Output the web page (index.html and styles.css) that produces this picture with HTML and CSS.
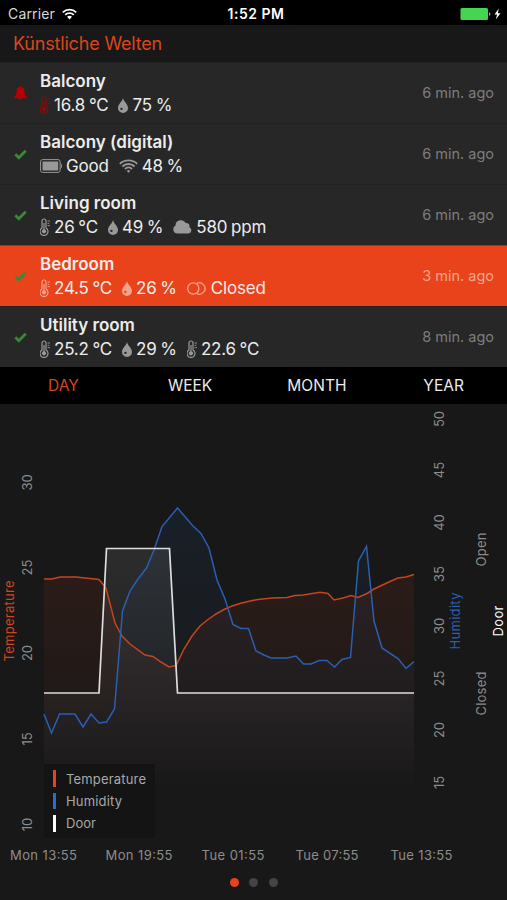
FILE: index.html
```html
<!DOCTYPE html>
<html lang="en">
<head>
    <meta charset="UTF-8">
    <meta name="viewport" content="width=device-width, initial-scale=1.0">
    <title>Künstliche Welten</title>
    <link rel="stylesheet" href="styles.css">
</head>
<body>
    <!-- Shared icons -->
    <svg class="sprite">
        <symbol id="thermometer" viewBox="0 0 10 18">
            <path d="M2 10V3a2 2 0 0 1 4 0v7a4 4 0 1 1-4 0z" fill="none" stroke="currentColor" stroke-width="1.2"/>
            <circle cx="4" cy="13.3" r="2.1" fill="currentColor"/>
            <path d="M4 5v7" stroke="currentColor" stroke-width="1.2"/>
            <path d="M7.5 3H10M7.5 5.3H9.3M7.5 7.6H10" stroke="currentColor" stroke-width=".9"/>
        </symbol>
        <symbol id="drop" viewBox="0 0 10 15">
            <path fill="currentColor" fill-rule="evenodd" d="M5 0C5.6 3.4 10 6.2 10 10a5 5 0 0 1-10 0C0 6.2 4.4 3.4 5 0zM3.4 9.7a1.2 1.2 0 1 0 .1 2.4 1.2 1.2 0 0 0-.1-2.4z"/>
        </symbol>
        <symbol id="check" viewBox="0 0 13 11">
            <path d="M1.3 5.3l3.5 3.5L11.7 1.8" fill="none" stroke="currentColor" stroke-width="2.7"/>
        </symbol>
    </svg>

    <div class="status-bar">
        <div class="carrier">
            <span>Carrier</span>
            <svg class="wifi" width="15" height="12" viewBox="0 0 15 12">
                <path d="M.8 4.3a9.7 9.7 0 0 1 13.4 0M3.2 6.9a6.2 6.2 0 0 1 8.6 0" fill="none" stroke="#fff" stroke-width="1.7"/>
                <path d="M5 8.8a3.7 3.7 0 0 1 5 0L7.5 11.5z" fill="#fff"/>
            </svg>
        </div>
        <span class="clock">1:52 PM</span>
        <svg class="power" width="42" height="14" viewBox="0 0 42 14">
            <rect x=".5" y="1" width="27.5" height="12" rx="1.5" fill="#46d552"/>
            <path d="M29 5a2.1 2.1 0 0 1 0 4z" fill="#46d552"/>
            <path d="M38.8 1.5L34.5 7.5h2.6l-1.3 5 4.7-6.2h-2.7z" fill="#fff"/>
        </svg>
    </div>

    <h1 class="title">Künstliche Welten</h1>

    <div class="sensors">
        <div class="sensor alarm">
            <svg class="state" width="13" height="14" viewBox="0 0 13 14">
                <path d="M6.5 0c.7 0 1 .4 1 1 2 .5 3 2 3 4.2 0 3 .8 4.3 2.5 5.8v1.3H0V11c1.7-1.5 2.5-2.8 2.5-5.8C2.5 3 3.5 1.5 5.5 1c0-.6.3-1 1-1zM5 12.3h3a1.5 1.5 0 0 1-3 0z" fill="#b40202"/>
            </svg>
            <div class="info">
                <div class="name">Balcony</div>
                <div class="values">
                    <span class="value"><svg class="thermometer"><use href="#thermometer"/></svg>16.8 °C</span>
                    <span class="value"><svg class="drop"><use href="#drop"/></svg>75 %</span>
                </div>
            </div>
            <span class="age">6 min. ago</span>
        </div>
        <div class="sensor">
            <svg class="state" width="13" height="11"><use href="#check"/></svg>
            <div class="info">
                <div class="name">Balcony (digital)</div>
                <div class="values">
                    <span class="value">
                        <svg width="22" height="14" viewBox="0 0 22 14">
                            <rect x=".6" y=".6" width="19.5" height="12.8" rx="2" fill="none" stroke="currentColor" stroke-width="1"/>
                            <rect x="2.5" y="2.5" width="15.7" height="9" fill="currentColor"/>
                            <path d="M20.3 4.3c1.6.6 1.6 4.8 0 5.4" fill="none" stroke="currentColor" stroke-width="1"/>
                        </svg>Good</span>
                    <span class="value">
                        <svg width="19" height="14" viewBox="0 0 19 14">
                            <path d="M.8 4.9a12.6 12.6 0 0 1 17.4 0M3.4 7.5a8.8 8.8 0 0 1 12.2 0M6 10a5 5 0 0 1 7 0" fill="none" stroke="currentColor" stroke-width="1.9"/>
                            <path d="M7.8 11.9a2.5 2.5 0 0 1 3.4 0L9.5 13.8z" fill="currentColor"/>
                        </svg>48 %</span>
                </div>
            </div>
            <span class="age">6 min. ago</span>
        </div>
        <div class="sensor">
            <svg class="state" width="13" height="11"><use href="#check"/></svg>
            <div class="info">
                <div class="name">Living room</div>
                <div class="values">
                    <span class="value"><svg class="thermometer"><use href="#thermometer"/></svg>26 °C</span>
                    <span class="value"><svg class="drop"><use href="#drop"/></svg>49 %</span>
                    <span class="value">
                        <svg width="19" height="14" viewBox="0 0 19 14">
                            <path d="M4.5 13.5a4.2 4.2 0 0 1-2-7.9A5.5 5.5 0 0 1 12.8 3a3.3 3.3 0 0 1 3.6 4.2 3.3 3.3 0 0 1-1 6.3z" fill="currentColor"/>
                        </svg>580 ppm</span>
                </div>
            </div>
            <span class="age">6 min. ago</span>
        </div>
        <div class="sensor selected">
            <svg class="state" width="13" height="11"><use href="#check"/></svg>
            <div class="info">
                <div class="name">Bedroom</div>
                <div class="values">
                    <span class="value"><svg class="thermometer"><use href="#thermometer"/></svg>24.5 °C</span>
                    <span class="value"><svg class="drop"><use href="#drop"/></svg>26 %</span>
                    <span class="value">
                        <svg width="20" height="13" viewBox="0 0 20 13">
                            <circle cx="6.3" cy="6.5" r="5.6" fill="none" stroke="currentColor" stroke-width="1.3"/>
                            <path d="M9.3 1.8a5.6 5.6 0 1 1 0 9.4" fill="none" stroke="currentColor" stroke-width="1.3"/>
                        </svg>Closed</span>
                </div>
            </div>
            <span class="age">3 min. ago</span>
        </div>
        <div class="sensor">
            <svg class="state" width="13" height="11"><use href="#check"/></svg>
            <div class="info">
                <div class="name">Utility room</div>
                <div class="values">
                    <span class="value"><svg class="thermometer"><use href="#thermometer"/></svg>25.2 °C</span>
                    <span class="value"><svg class="drop"><use href="#drop"/></svg>29 %</span>
                    <span class="value"><svg class="thermometer"><use href="#thermometer"/></svg>22.6 °C</span>
                </div>
            </div>
            <span class="age">8 min. ago</span>
        </div>
    </div>

    <div class="tabs">
        <span class="tab active">DAY</span>
        <span class="tab">WEEK</span>
        <span class="tab">MONTH</span>
        <span class="tab">YEAR</span>
    </div>

    <svg class="chart" width="507" height="466" viewBox="0 404 507 466">
        <defs>
            <linearGradient id="tempFill" gradientUnits="userSpaceOnUse" x1="0" y1="574" x2="0" y2="790">
                <stop offset="0" stop-color="#e8431b" stop-opacity=".09"/>
                <stop offset="1" stop-color="#e8431b" stop-opacity="0"/>
            </linearGradient>
            <linearGradient id="humFill" gradientUnits="userSpaceOnUse" x1="0" y1="508" x2="0" y2="790">
                <stop offset="0" stop-color="#2c6cc8" stop-opacity=".09"/>
                <stop offset="1" stop-color="#2c6cc8" stop-opacity="0"/>
            </linearGradient>
            <linearGradient id="doorFill" gradientUnits="userSpaceOnUse" x1="0" y1="548" x2="0" y2="790">
                <stop offset="0" stop-color="#fff" stop-opacity=".09"/>
                <stop offset="1" stop-color="#fff" stop-opacity="0"/>
            </linearGradient>
        </defs>

        <!-- Temperature -->
        <path fill="url(#tempFill)" d="M44 579L52 579 60 577 76 577 99 579.5 106 588 115 623 122 636 130 644 145 655 153 656.5 161 662 169 667 176 665.5 184 649 192 636 200 626 208 619.5 216 614 224 609.5 232 606 240 603.5 250 601 258 599.5 272 598 287 597.5 295 595.5 303 595 320 592.3 328 593.5 334 600 343 598 351 595.5 358 597.5 367 593.5 374 589 390 581.5 398 578 406 577 414 574.5V790H44z"/>
        <!-- Humidity -->
        <path fill="url(#humFill)" d="M44 714L51.5 733 59.5 714 75 714 83 727 91 714 99 723 106.5 722 114.5 709 122.5 611 130 591 138 579 146.5 568 154 550 162 526.5 177.5 508 193 526 201 533.5 209 548 217 580 225 599 233 624.5 241 628.5 248.5 628.5 256 651 264 655 271 658 287 658 296 656 303.5 664 311 664 319 660.5 327 660.5 334.5 667 342 659.5 350.5 657.5 358.5 561 366.5 546.5 374 621 382 648 398 658.5 406 668.5 414 661.5V790H44z"/>
        <!-- Door -->
        <path fill="url(#doorFill)" d="M44 693H99L106.5 548.5H169.5L177.5 693H414V790H44z"/>

        <polyline class="line temperature" points="44,579 52,579 60,577 76,577 99,579.5 106,588 115,623 122,636 130,644 145,655 153,656.5 161,662 169,667 176,665.5 184,649 192,636 200,626 208,619.5 216,614 224,609.5 232,606 240,603.5 250,601 258,599.5 272,598 287,597.5 295,595.5 303,595 320,592.3 328,593.5 334,600 343,598 351,595.5 358,597.5 367,593.5 374,589 390,581.5 398,578 406,577 414,574.5"/>
        <polyline class="line humidity" points="44,714 51.5,733 59.5,714 75,714 83,727 91,714 99,723 106.5,722 114.5,709 122.5,611 130,591 138,579 146.5,568 154,550 162,526.5 177.5,508 193,526 201,533.5 209,548 217,580 225,599 233,624.5 241,628.5 248.5,628.5 256,651 264,655 271,658 287,658 296,656 303.5,664 311,664 319,660.5 327,660.5 334.5,667 342,659.5 350.5,657.5 358.5,561 366.5,546.5 374,621 382,648 398,658.5 406,668.5 414,661.5"/>
        <polyline class="line door" points="44,693 99,693 106.5,548.5 169.5,548.5 177.5,693 414,693"/>

        <!-- Left axis -->
        <g class="tick">
            <text transform="translate(32 482.5) rotate(-90)">30</text>
            <text transform="translate(32 567.5) rotate(-90)">25</text>
            <text transform="translate(32 653) rotate(-90)">20</text>
            <text transform="translate(32 739) rotate(-90)">15</text>
            <text transform="translate(32 824.5) rotate(-90)">10</text>
        </g>
        <!-- Right axes -->
        <g class="tick">
            <text transform="translate(443.5 419) rotate(-90)">50</text>
            <text transform="translate(443.5 470) rotate(-90)">45</text>
            <text transform="translate(443.5 522.5) rotate(-90)">40</text>
            <text transform="translate(443.5 574) rotate(-90)">35</text>
            <text transform="translate(443.5 626) rotate(-90)">30</text>
            <text transform="translate(443.5 678.5) rotate(-90)">25</text>
            <text transform="translate(443.5 730) rotate(-90)">20</text>
            <text transform="translate(443.5 782.5) rotate(-90)">15</text>
            <text transform="translate(486 549.5) rotate(-90)" textLength="34">Open</text>
            <text transform="translate(486 693.5) rotate(-90)" textLength="44">Closed</text>
        </g>
        <g class="axis-title">
            <text transform="translate(14 621) rotate(-90)" textLength="81" fill="#d1451f">Temperature</text>
            <text transform="translate(460 621) rotate(-90)" textLength="57" fill="#2a5fb4">Humidity</text>
            <text transform="translate(502.5 621) rotate(-90)" textLength="31" fill="#fff">Door</text>
        </g>
        <!-- Time axis -->
        <g class="tick">
            <text x="43.5" y="859.5" textLength="67">Mon 13:55</text>
            <text x="139" y="859.5" textLength="67">Mon 19:55</text>
            <text x="233" y="859.5" textLength="63">Tue 01:55</text>
            <text x="327" y="859.5" textLength="63">Tue 07:55</text>
            <text x="421.5" y="859.5" textLength="62">Tue 13:55</text>
        </g>

        <!-- Legend -->
        <rect x="44" y="764" width="111" height="74" fill="#141414"/>
        <rect x="53" y="770" width="3" height="17" fill="#e8431b"/>
        <rect x="53" y="793" width="3" height="16" fill="#2c6cc8"/>
        <rect x="53" y="815" width="3" height="17" fill="#fff"/>
        <g class="legend">
            <text x="66" y="783.5" textLength="80">Temperature</text>
            <text x="66" y="806" textLength="56">Humidity</text>
            <text x="66" y="828" textLength="30">Door</text>
        </g>
    </svg>

    <div class="pager">
        <span class="dot current"></span>
        <span class="dot"></span>
        <span class="dot"></span>
    </div>
</body>
</html>
```
FILE: styles.css
```css
body {
    display: flex;
    flex-direction: column;
    width: 507px;
    height: 900px;
    margin: 0;
    overflow: hidden;
    background-color: #181818;
    color: #ececec;
    font-family: Inter, "Liberation Sans", sans-serif;
}

svg {
    display: block;
    flex: none;
}

.sprite {
    display: none;
}

.status-bar {
    display: grid;
    grid-template-columns: 1fr auto 1fr;
    align-items: center;
    box-sizing: border-box;
    height: 25px;
    padding: 2px 5px 0 8px;
    background-color: #000;
    font-size: 14px;
}

.carrier {
    display: flex;
    align-items: center;
    gap: 7px;
    color: #d8d8d8;
    letter-spacing: 0.15px;
}

.clock {
    padding-left: 2px;
    font-weight: 600;
    color: #fff;
    letter-spacing: 0.5px;
}

.power {
    justify-self: end;
}

.title {
    height: 37px;
    margin: 0;
    padding-left: 13px;
    color: #d9461d;
    font-size: 18px;
    font-weight: 400;
    line-height: 38px;
    letter-spacing: -0.18px;
}

.sensor {
    display: flex;
    align-items: center;
    box-sizing: border-box;
    height: 61px;
    padding: 0 13px 0 14px;
    border-top: 1px solid #222;
    background-color: #272727;
}

.state {
    width: 13px;
    margin-right: 13px;
    color: #388a38;
}

.info {
    flex: 1;
    line-height: 24px;
}

.name {
    font-size: 17px;
    font-weight: 600;
}

.values {
    display: flex;
    gap: 10px;
    font-size: 17px;
    letter-spacing: -0.2px;
    word-spacing: -0.8px;
}

.value {
    display: flex;
    align-items: center;
    gap: 4px;
}

.value svg {
    color: #999;
}

.thermometer {
    width: 10px;
    height: 18px;
}

.drop {
    width: 10px;
    height: 15px;
}

.alarm .thermometer {
    color: #8c0a0a;
}

.age {
    padding-bottom: 1px;
    color: #7d7d7d;
    font-size: 14.5px;
}

.selected {
    border-color: #a33318;
    background-color: #e8431b;
}

.selected .value svg,
.selected .age {
    color: #f5a38c;
}

.tabs {
    display: grid;
    grid-template-columns: repeat(4, 1fr);
    height: 37px;
    background-color: #000;
    font-size: 15.5px;
    line-height: 38px;
    text-align: center;
}

.active {
    color: #d9461d;
}

/* Chart */
.line {
    fill: none;
    stroke-width: 1.5;
}

.temperature {
    stroke: #c54420;
}

.humidity {
    stroke: #2a5fb0;
}

.door {
    stroke: #ddd;
    stroke-width: 1.7;
}

.tick {
    fill: #8c8c8c;
    font-size: 13px;
    text-anchor: middle;
}

.axis-title {
    font-size: 13px;
    text-anchor: middle;
}

.legend {
    fill: #a8a8a8;
    font-size: 13px;
}

.pager {
    display: flex;
    justify-content: center;
    gap: 10.5px;
    padding-top: 7.5px;
}

.dot {
    width: 9px;
    height: 9px;
    border-radius: 50%;
    background-color: #444;
}

.current {
    background-color: #e8431b;
}
```
